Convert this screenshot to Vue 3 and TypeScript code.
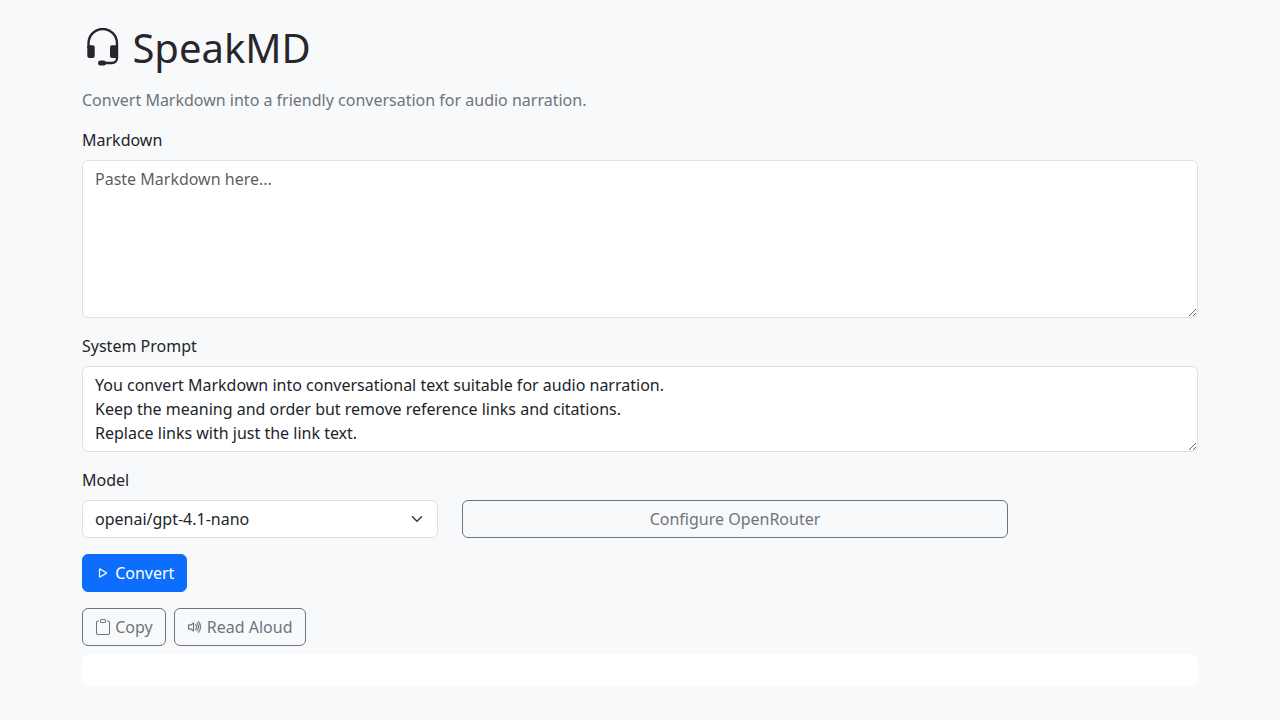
<script setup lang="ts">
import { ref } from 'vue'

const markdown = ref<string>('')
const systemPrompt = ref<string>(
  [
    'You convert Markdown into conversational text suitable for audio narration.',
    'Keep the meaning and order but remove reference links and citations.',
    'Replace links with just the link text.',
  ].join('\n'),
)
const models: string[] = ['openai/gpt-4.1-nano', 'openai/gpt-4.1-mini']
const model = ref<string>(models[0])
const output = ref<string>('')
</script>

<template>
  <main class="container">
    <h1 class="title">
      <svg class="icon" viewBox="0 0 40 40" aria-hidden="true">
        <path d="M6.500 20v-4.500a14 14.300 0 0 1 28.500 0V30a5 5 0 0 1-5 5H20" fill="none" stroke="currentColor" stroke-width="2.400" />
        <rect x="5.300" y="17.200" width="7.400" height="12.700" rx="2" fill="currentColor" />
        <rect x="28" y="17.200" width="8" height="12.700" rx="2" fill="currentColor" />
        <rect x="16" y="32.400" width="8" height="5" rx="2.500" fill="currentColor" />
      </svg>
      SpeakMD
    </h1>
    <p class="lead">Convert Markdown into a friendly conversation for audio narration.</p>

    <div class="field">
      <label class="label" for="markdown">Markdown</label>
      <textarea id="markdown" v-model="markdown" class="control" rows="6" placeholder="Paste Markdown here..."></textarea>
    </div>

    <div class="field">
      <label class="label" for="prompt">System Prompt</label>
      <textarea id="prompt" v-model="systemPrompt" class="control" rows="3"></textarea>
    </div>

    <div class="row">
      <div class="model">
        <label class="label" for="model">Model</label>
        <div class="select-wrap">
          <select id="model" v-model="model" class="control select">
            <option v-for="name in models" :key="name" :value="name">{{ name }}</option>
          </select>
          <svg class="chevron" viewBox="0 0 16 16" fill="none" stroke="#343a40" stroke-width="2" stroke-linecap="round" stroke-linejoin="round">
            <path d="m2 5 6 6 6-6" />
          </svg>
        </div>
      </div>
      <button type="button" class="btn outline configure">Configure OpenRouter</button>
    </div>

    <div class="actions">
      <button type="button" class="btn primary">
        <svg class="icon" viewBox="0 0 16 16" fill="currentColor" stroke="currentColor" stroke-width="0.2" aria-hidden="true">
          <path d="M10.804 8 5 4.633v6.734zm.792-.696a.802.802 0 0 1 0 1.392l-6.363 3.692C4.713 12.690 4 12.345 4 11.692V4.308c0-.653.713-.998 1.233-.696z" />
        </svg>
        Convert
      </button>
    </div>

    <div class="tools">
      <button type="button" class="btn outline">
        <svg class="icon" viewBox="0 0 16 16" fill="currentColor" aria-hidden="true">
          <path d="M4 1.500H3a2 2 0 0 0-2 2V14a2 2 0 0 0 2 2h10a2 2 0 0 0 2-2V3.500a2 2 0 0 0-2-2h-1v1h1a1 1 0 0 1 1 1V14a1 1 0 0 1-1 1H3a1 1 0 0 1-1-1V3.500a1 1 0 0 1 1-1h1z" />
          <path d="M9.500 1a.5.5 0 0 1 .5.5v1a.5.5 0 0 1-.5.5h-3a.5.5 0 0 1-.5-.5v-1a.5.5 0 0 1 .5-.5zm-3-1A1.500 1.500 0 0 0 5 1.500v1A1.500 1.500 0 0 0 6.500 4h3A1.500 1.500 0 0 0 11 2.500v-1A1.500 1.500 0 0 0 9.500 0z" />
        </svg>
        Copy
      </button>
      <button type="button" class="btn outline">
        <svg class="icon" viewBox="0 0 16 16" fill="currentColor" stroke="currentColor" stroke-width="0.2" aria-hidden="true">
          <path d="M11.536 14.010A8.470 8.470 0 0 0 14.026 8a8.470 8.470 0 0 0-2.490-6.010l-.708.707A7.480 7.480 0 0 1 13.025 8c0 2.071-.840 3.946-2.197 5.303z" />
          <path d="M10.121 12.596A6.480 6.480 0 0 0 12.025 8a6.480 6.480 0 0 0-1.904-4.596l-.707.707A5.480 5.480 0 0 1 11.025 8a5.480 5.480 0 0 1-1.610 3.890z" />
          <path d="M10.025 8a4.500 4.500 0 0 1-1.318 3.182L8 10.475A3.500 3.500 0 0 0 9.025 8c0-.966-.392-1.841-1.025-2.475l.707-.707A4.500 4.500 0 0 1 10.025 8M7 4a.5.5 0 0 0-.812-.390L3.825 5.500H1.500A.5.5 0 0 0 1 6v4a.5.5 0 0 0 .5.5h2.325l2.363 1.890A.5.5 0 0 0 7 12zM4.312 6.390 6 5.040v5.920L4.312 9.610A.5.5 0 0 0 4 9.500H2v-3h2a.5.5 0 0 0 .312-.110" />
        </svg>
        Read Aloud
      </button>
    </div>

    <div class="output">{{ output }}</div>
  </main>
</template>

<style>
body {
  background: #f8f9fa;
}
</style>

<style scoped>
.container,
.container * {
  box-sizing: border-box;
}
.container {
  width: 1140px;
  margin: 0 auto;
  padding: 24px 12px;
  color: #212529;
  font: 400 16px/24px 'Noto Sans', 'Liberation Sans', sans-serif;
}
.title {
  margin: 0 0 16px;
  color: #29252d;
  font-size: 40px;
  font-weight: 400;
  line-height: 48px;
}
.icon {
  display: inline-block;
  width: 1em;
  height: 1em;
  vertical-align: -0.125em;
}
.lead {
  margin: 0 0 16px;
  color: #6c757d;
}
.field {
  margin-bottom: 16px;
}
.label {
  display: block;
  margin-bottom: 8px;
}
.control {
  display: block;
  width: 100%;
  margin: 0;
  padding: 6px 12px;
  border: 1px solid #dee2e6;
  border-radius: 6px;
  background: #fff;
  color: #212529;
  font: inherit;
  resize: vertical;
}
.control::placeholder {
  color: rgba(33, 37, 41, 0.75);
}
.row {
  display: flex;
  align-items: flex-end;
  gap: 24px;
  margin-bottom: 16px;
}
.model {
  width: 356px;
}
.select-wrap {
  display: grid;
  align-items: center;
}
.select-wrap > * {
  grid-area: 1 / 1;
}
.select {
  height: 38px;
  padding-right: 36px;
  appearance: none;
}
.chevron {
  justify-self: end;
  z-index: 1;
  width: 16px;
  height: 12px;
  margin-right: 13px;
  pointer-events: none;
}
.btn {
  height: 38px;
  margin: 0;
  padding: 6px 12px;
  border: 1px solid;
  border-radius: 6px;
  font: inherit;
  white-space: nowrap;
}
.outline {
  border-color: #6c757d;
  background: transparent;
  color: #6c757d;
}
.primary {
  border-color: #0d6efd;
  background: #0d6efd;
  color: #fff;
}
.configure {
  width: 546px;
}
.actions {
  display: flex;
  margin-bottom: 16px;
}
.tools {
  display: flex;
  gap: 8px;
  margin-bottom: 8px;
}
.output {
  min-height: 32px;
  padding: 16px;
  border-radius: 6px;
  background: #fff;
  white-space: pre-wrap;
}
</style>
